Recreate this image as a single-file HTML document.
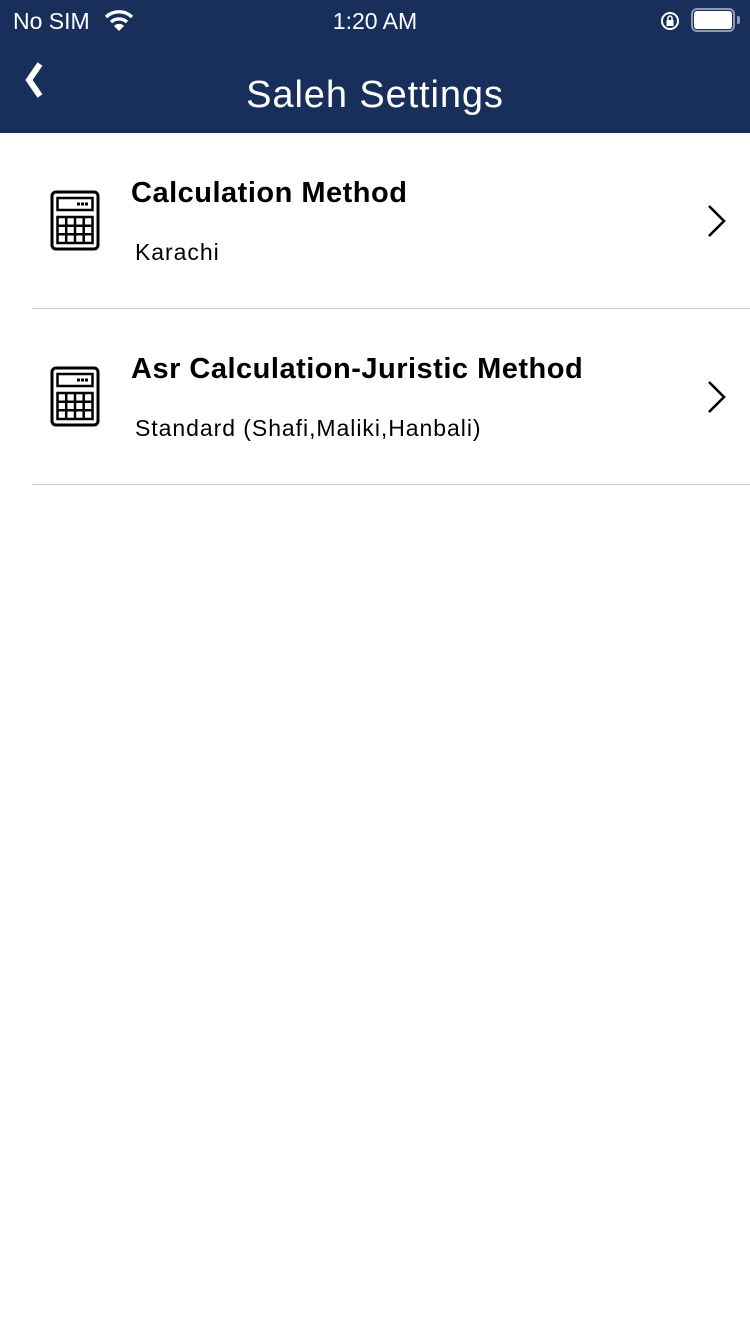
<!DOCTYPE html>
<html><head><meta charset="utf-8"><style>
*{margin:0;padding:0;box-sizing:border-box}
body{width:750px;height:1334px;background:#fff;font-family:"Liberation Sans",sans-serif;position:relative;overflow:hidden}
.hdr{position:absolute;left:0;top:0;width:750px;height:133px;background:#182f5c;color:#fff}
.abs{position:absolute}
.t{font-size:29px;font-weight:bold;color:#000;position:absolute;left:131px;letter-spacing:0.5px}
.s{font-size:23px;color:#000;position:absolute;left:135px;letter-spacing:0.95px}
.line{position:absolute;left:32px;right:0;height:1px;background:#c8c8cc}
</style></head><body>
<div class="hdr">
  <div class="abs" style="left:13px;top:8px;font-size:23px">No SIM</div>
  <svg class="abs" style="left:104px;top:8px" width="30" height="24" viewBox="0 0 30 24">
    <path d="M2 9 A19 19 0 0 1 28 9" stroke="#fff" stroke-width="3.4" fill="none"/>
    <path d="M7 14 A12 12 0 0 1 23 14" stroke="#fff" stroke-width="3.4" fill="none"/>
    <path d="M15 23 L10 18 A7 7 0 0 1 20 18 Z" fill="#fff"/>
  </svg>
  <div class="abs" style="left:0;width:750px;text-align:center;top:8px;font-size:23px">1:20 AM</div>
  <svg class="abs" style="left:660px;top:10px" width="22" height="22" viewBox="0 0 22 22">
    <circle cx="10" cy="11" r="8" stroke="#fff" stroke-width="2" fill="none"/>
    <rect x="6.5" y="10" width="7" height="6" fill="#fff"/>
    <path d="M8 10 V8 a2 2 0 0 1 4 0 V10" stroke="#fff" stroke-width="1.5" fill="none"/>
  </svg>
  <div class="abs" style="left:691px;top:8px;width:44px;height:24px;border:2px solid #8f9bb3;border-radius:6px"></div>
  <div class="abs" style="left:694px;top:11px;width:38px;height:18px;background:#fff;border-radius:3px"></div>
  <div class="abs" style="left:737px;top:16px;width:3px;height:8px;background:#8f9bb3;border-radius:0 2px 2px 0"></div>
  <svg class="abs" style="left:22px;top:61px" width="24" height="38" viewBox="0 0 24 38">
    <path d="M18 3 L7 19 L18 35" stroke="#fff" stroke-width="6" fill="none"/>
  </svg>
  <div class="abs" style="left:0;width:750px;text-align:center;top:74px;font-size:38px;letter-spacing:0.9px">Saleh Settings</div>
</div>

<svg class="abs" style="left:50px;top:190px" width="50" height="62" viewBox="0 0 50 62">
  <rect x="2" y="2" width="46" height="57" rx="4" stroke="#000" stroke-width="3" fill="none"/>
  <rect x="7.5" y="8" width="35" height="12" stroke="#000" stroke-width="2.5" fill="none"/>
  <rect x="31" y="12.5" width="3" height="3" fill="#000"/><rect x="35" y="12.5" width="3" height="3" fill="#000"/><rect x="27" y="12.5" width="3" height="3" fill="#000"/>
  <path d="M7.5 27h35v26h-35z M16.2 27v26 M25 27v26 M33.7 27v26 M7.5 35.7h35 M7.5 44.3h35" stroke="#000" stroke-width="2.5" fill="none"/>
</svg>
<div class="t" style="top:177px">Calculation Method</div>
<div class="s" style="top:239px">Karachi</div>
<svg class="abs" style="left:705px;top:203px" width="24" height="36" viewBox="0 0 24 36">
  <path d="M4 3 L19 18 L4 33" stroke="#000" stroke-width="2.6" fill="none"/>
</svg>
<div class="line" style="top:308px"></div>

<svg class="abs" style="left:50px;top:366px" width="50" height="62" viewBox="0 0 50 62">
  <rect x="2" y="2" width="46" height="57" rx="4" stroke="#000" stroke-width="3" fill="none"/>
  <rect x="7.5" y="8" width="35" height="12" stroke="#000" stroke-width="2.5" fill="none"/>
  <rect x="31" y="12.5" width="3" height="3" fill="#000"/><rect x="35" y="12.5" width="3" height="3" fill="#000"/><rect x="27" y="12.5" width="3" height="3" fill="#000"/>
  <path d="M7.5 27h35v26h-35z M16.2 27v26 M25 27v26 M33.7 27v26 M7.5 35.7h35 M7.5 44.3h35" stroke="#000" stroke-width="2.5" fill="none"/>
</svg>
<div class="t" style="top:353px">Asr Calculation-Juristic Method</div>
<div class="s" style="top:415px">Standard (Shafi,Maliki,Hanbali)</div>
<svg class="abs" style="left:705px;top:379px" width="24" height="36" viewBox="0 0 24 36">
  <path d="M4 3 L19 18 L4 33" stroke="#000" stroke-width="2.6" fill="none"/>
</svg>
<div class="line" style="top:484px"></div>
</body></html>
